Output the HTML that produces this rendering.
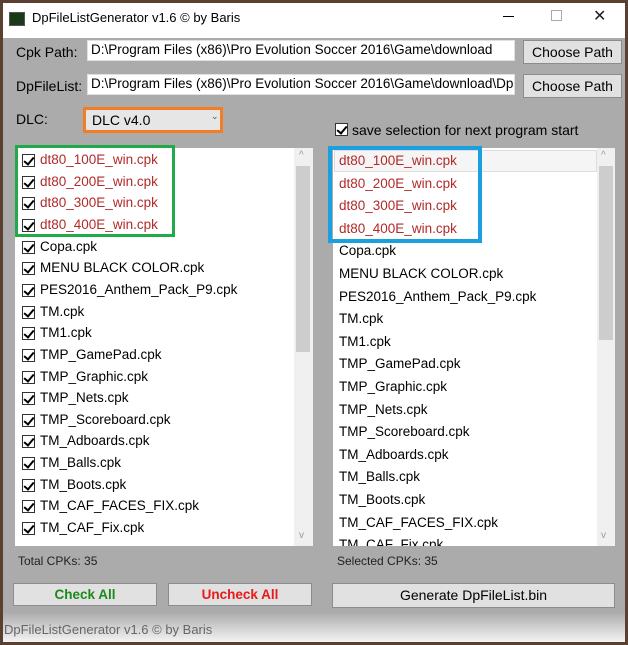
<!DOCTYPE html>
<html><head><style>
*{margin:0;padding:0;box-sizing:border-box}
body{width:628px;height:645px;overflow:hidden;background:#5a4030;font-family:"Liberation Sans",sans-serif;font-size:13.5px;color:#000;position:relative}
.a{position:absolute;white-space:nowrap}
.win{position:absolute;left:3px;top:3px;width:622px;height:639px;background:#ababab}
.title{position:absolute;left:3px;top:3px;width:622px;height:35px;background:#fff}
.tb{background:#fff;border:1px solid #e0e0e0;height:21px;padding:1px 3px;overflow:hidden;font-size:13.5px}
.btn{background:#e1e1e1;border:1px solid #8c8c8c;text-align:center;line-height:22px}
.list{background:#fff;overflow:hidden}
.sb{position:absolute;background:#f0f0f0}
.cb{position:absolute;width:13px;height:13px;border:1px solid #333;background:#fff}
.cb:after{content:"";position:absolute;left:3px;top:0px;width:4px;height:8px;border:solid #000;border-width:0 2px 2px 0;transform:rotate(40deg)}
.red{color:#b22a2a}
</style></head><body>
<div class="win"></div>
<div class="title"></div>
<div class="a" style="left:9px;top:12px;width:16px;height:14px;background:#1a3a1a;border:1px solid #555"></div>
<div class="a" style="left:32px;top:10px;font-size:13px">DpFileListGenerator v1.6 © by Baris</div>
<div class="a" style="left:503px;top:16px;width:11px;height:1px;background:#000"></div>
<div class="a" style="left:551px;top:10px;width:11px;height:11px;border:1px solid #aaa"></div>
<div class="a" style="left:593px;top:6px;font-size:16px;color:#222">✕</div>

<div class="a" style="left:16px;top:44px;font-size:14px">Cpk Path:</div>
<div class="a tb" style="left:87px;top:40px;width:428px">D:\Program Files (x86)\Pro Evolution Soccer 2016\Game\download</div>
<div class="a btn" style="left:523px;top:40px;width:99px;height:24px;font-size:14px">Choose Path</div>
<div class="a" style="left:16px;top:78px;font-size:14px">DpFileList:</div>
<div class="a tb" style="left:87px;top:74px;width:428px">D:\Program Files (x86)\Pro Evolution Soccer 2016\Game\download\Dp</div>
<div class="a btn" style="left:523px;top:74px;width:99px;height:24px;font-size:14px">Choose Path</div>
<div class="a" style="left:16px;top:111px;font-size:14px">DLC:</div>
<div class="a" style="left:83px;top:107px;width:140px;height:26px;border:3px solid #f37d25;background:#e6e6e6"></div>
<div class="a" style="left:92px;top:112px;font-size:14px">DLC v4.0</div>
<div class="a" style="left:211px;top:111px;font-size:9px;color:#555">⌄</div>
<div class="cb" style="left:335px;top:123px"></div>
<div class="a" style="left:352px;top:122px;font-size:14px">save selection for next program start</div>

<div class="a list" style="left:15px;top:148px;width:298px;height:398px"></div>
<div class="sb" style="left:294px;top:148px;width:19px;height:398px"></div>
<div class="a" style="left:296px;top:166px;width:14px;height:186px;background:#cdcdcd"></div>
<div class="a" style="left:299px;top:150px;font-size:10px;color:#999">^</div>
<div class="a" style="left:299px;top:530px;font-size:10px;color:#999">v</div>

<div class="a list" style="left:333px;top:148px;width:282px;height:398px"></div>
<div class="sb" style="left:597px;top:148px;width:18px;height:398px"></div>
<div class="a" style="left:599px;top:166px;width:14px;height:174px;background:#cdcdcd"></div>
<div class="a" style="left:601px;top:150px;font-size:10px;color:#999">^</div>
<div class="a" style="left:601px;top:530px;font-size:10px;color:#999">v</div>
<div class="a" style="left:334px;top:150px;width:263px;height:22px;background:#f5f5f5;border:1px solid #ddd"></div>

<div id="L"></div><div id="R"></div>
<script>
var n=["dt80_100E_win.cpk","dt80_200E_win.cpk","dt80_300E_win.cpk","dt80_400E_win.cpk","Copa.cpk","MENU BLACK COLOR.cpk","PES2016_Anthem_Pack_P9.cpk","TM.cpk","TM1.cpk","TMP_GamePad.cpk","TMP_Graphic.cpk","TMP_Nets.cpk","TMP_Scoreboard.cpk","TM_Adboards.cpk","TM_Balls.cpk","TM_Boots.cpk","TM_CAF_FACES_FIX.cpk","TM_CAF_Fix.cpk","TM_Cafe.cpk"];
var h="";
for(var i=0;i<n.length;i++){var y=152+i*21.65;if(y>540)break;
h+='<div class="cb" style="left:22px;top:'+(y+2)+'px"></div><div class="a'+(i<4?' red':'')+'" style="left:40px;top:'+y+'px;font-size:13.5px">'+n[i]+'</div>';}
for(var i=0;i<n.length;i++){var y=153+i*22.6;if(y>540)break;
h+='<div class="a'+(i<4?' red':'')+'" style="left:339px;top:'+y+'px;font-size:13.5px">'+n[i]+'</div>';}
document.getElementById('L').innerHTML=h;
</script>
<div class="a" style="left:15px;top:546px;width:298px;height:10px;background:#ababab"></div>
<div class="a" style="left:333px;top:546px;width:282px;height:10px;background:#ababab"></div>
<div class="a" style="left:15px;top:145px;width:160px;height:92px;border:3px solid #21aa4a"></div>
<div class="a" style="left:328px;top:146px;width:154px;height:97px;border:4px solid #1aa0e0"></div>

<div class="a" style="left:18px;top:554px;font-size:12px;color:#222">Total CPKs: 35</div>
<div class="a" style="left:337px;top:554px;font-size:12px;color:#222">Selected CPKs: 35</div>
<div class="a btn" style="left:13px;top:583px;width:144px;height:23px;font-weight:bold;color:#1a8a1a">Check All</div>
<div class="a btn" style="left:168px;top:583px;width:144px;height:23px;font-weight:bold;color:#e81a1a">Uncheck All</div>
<div class="a btn" style="left:332px;top:583px;width:283px;height:25px;font-size:14px">Generate DpFileList.bin</div>
<div class="a" style="left:3px;top:612px;width:622px;height:30px;background:linear-gradient(#ababab,#f4f4f4)"></div>
<div class="a" style="left:4px;top:622px;font-size:13px;color:#666">DpFileListGenerator v1.6 © by Baris</div>
</body></html>
